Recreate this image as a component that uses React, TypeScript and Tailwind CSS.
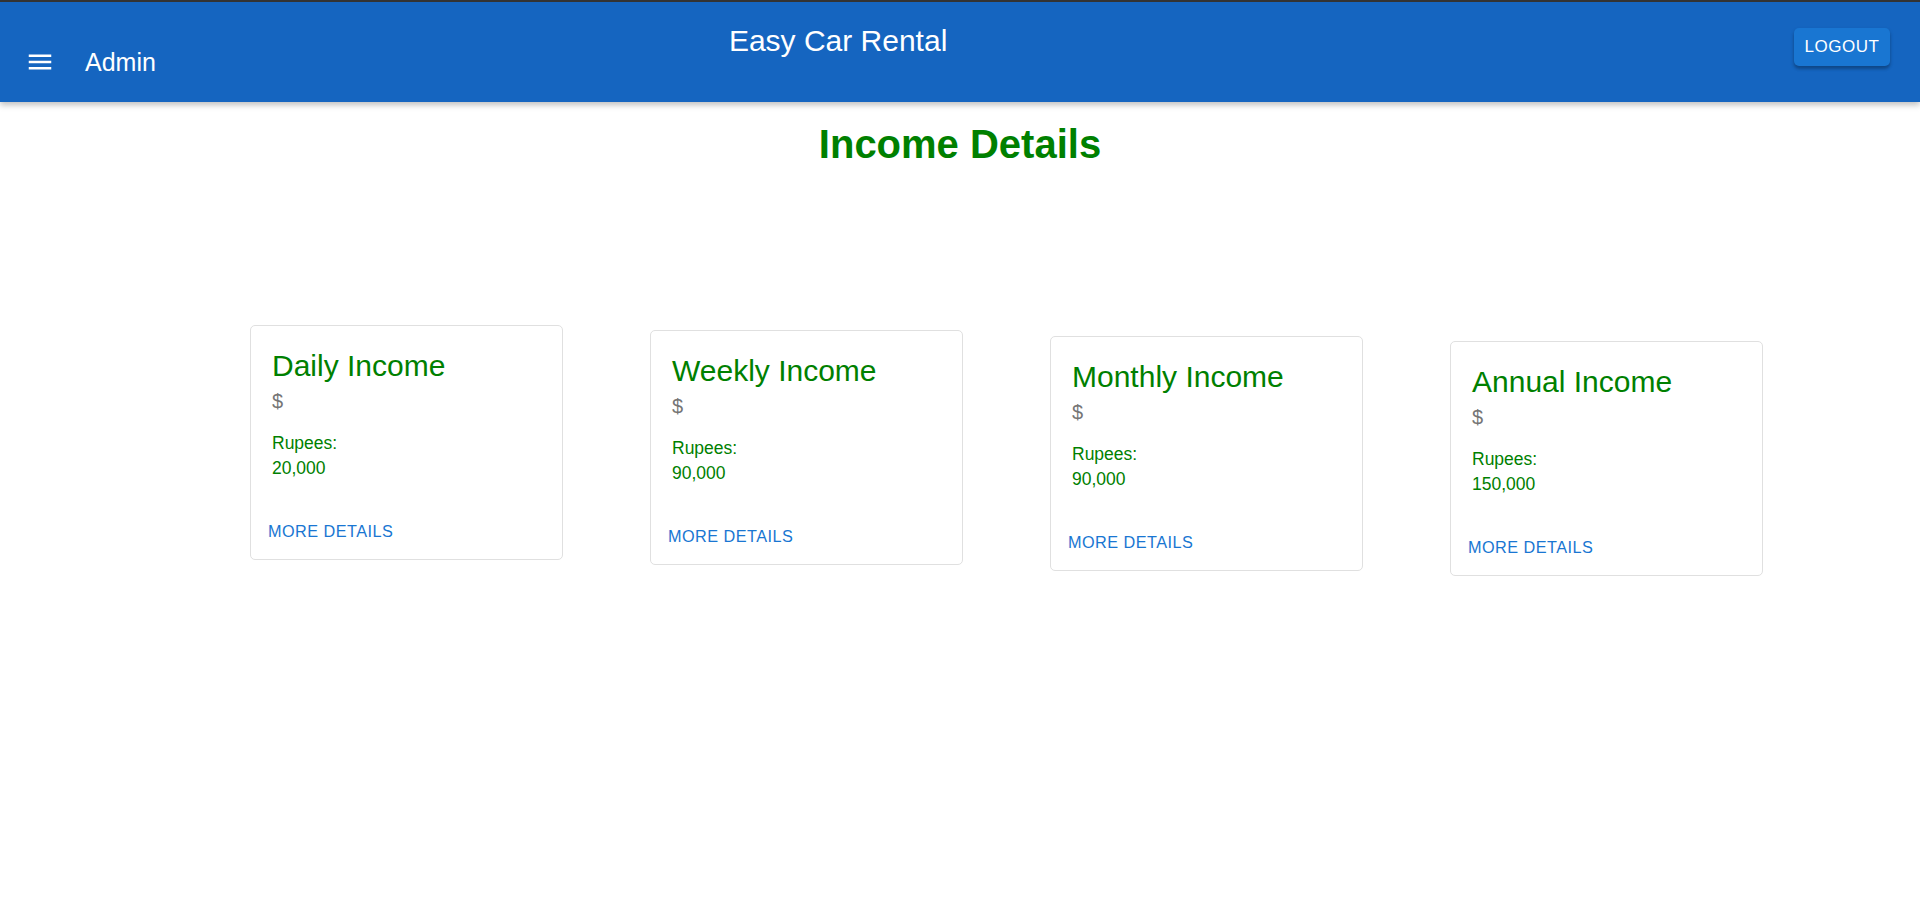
import React from "react";

const cards = [
  { title: "Daily Income", amount: "20,000", mt: "mt-0" },
  { title: "Weekly Income", amount: "90,000", mt: "mt-[5px]" },
  { title: "Monthly Income", amount: "90,000", mt: "mt-[11px]" },
  { title: "Annual Income", amount: "150,000", mt: "mt-[16px]" },
];

export default function App() {
  return (
    <div className="min-h-[901px] bg-white font-['Liberation_Sans',Arial,sans-serif]">
      <header className="relative z-10 h-[102px] border-t-2 border-[#333333] bg-[#1565c0] shadow-[0_3px_6px_rgba(0,0,0,0.25)] flex items-start">
        <div className="flex items-center h-full pl-[25px] pt-[20px]">
          <svg width="30" height="30" viewBox="0 0 24 24" fill="white">
            <path d="M3 18h18v-2H3v2zm0-5h18v-2H3v2zm0-7v2h18V6H3z" />
          </svg>
          <span className="ml-[30px] text-[25px] leading-[30px] text-white">Admin</span>
        </div>
        <div className="ml-[573px] mt-[22px] text-[30px] leading-[34px] text-white">Easy Car Rental</div>
        <div className="ml-auto mr-[30px] mt-[26px]">
          <button className="h-[38px] w-[96px] rounded-[5px] bg-[#1976d2] text-white text-[17px] font-normal tracking-[0.5px] shadow-[0_3px_3px_rgba(0,0,0,0.2),0_2px_4px_rgba(0,0,0,0.14)]">
            LOGOUT
          </button>
        </div>
      </header>
      <h1 className="mt-[19px] text-center text-[40px] leading-[46px] font-bold text-[#008000]">Income Details</h1>
      <div className="flex items-start gap-[87px] pl-[250px] mt-[158px]">
        {cards.map((c) => (
          <div
            key={c.title}
            className={`${c.mt} w-[313px] h-[235px] rounded-[5px] border border-[#e0e0e0] bg-white flex flex-col`}
          >
            <div className="px-[21px] pt-[20px] pb-[20px]">
              <div className="text-[30px] leading-[40px] text-[#008000]">{c.title}</div>
              <div className="text-[20px] leading-[30px] text-[#757575] mb-[15px]">$</div>
              <div className="text-[17.5px] leading-[25px] text-[#008000]">Rupees:</div>
              <div className="text-[17.5px] leading-[25px] text-[#008000]">{c.amount}</div>
            </div>
            <div className="px-[10px] pt-[10px]">
              <button className="h-[40px] px-[7px] text-[16.25px] tracking-[0.46px] text-[#1976d2]">MORE DETAILS</button>
            </div>
          </div>
        ))}
      </div>
    </div>
  );
}
